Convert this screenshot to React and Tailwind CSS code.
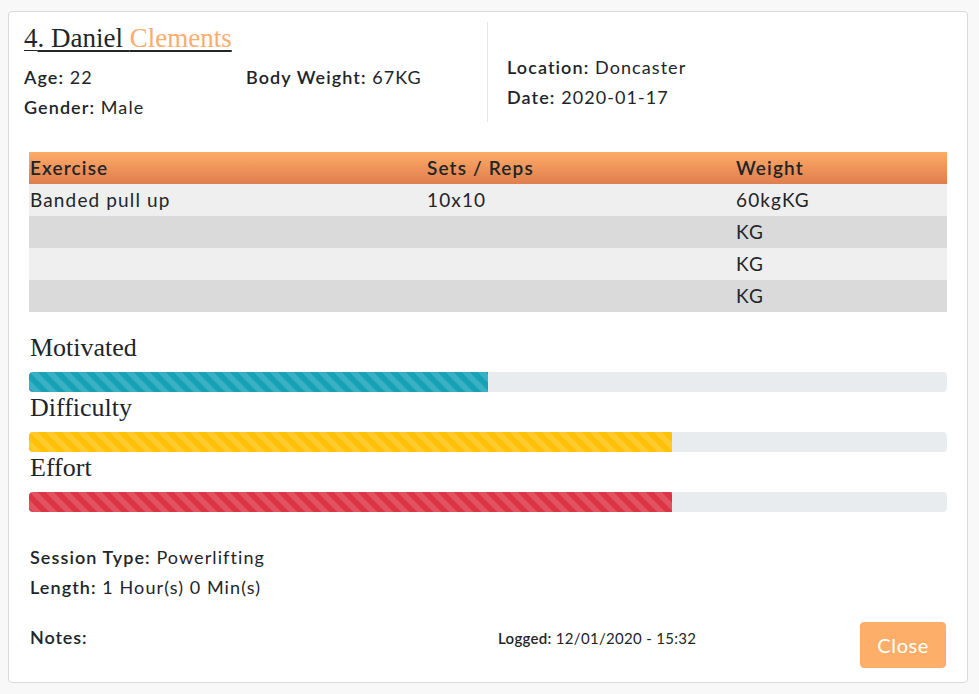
import React from 'react';

const rows = [
    { exercise: 'Banded pull up', sets: '10x10', weight: '60kgKG' },
    { exercise: '', sets: '', weight: 'KG' },
    { exercise: '', sets: '', weight: 'KG' },
    { exercise: '', sets: '', weight: 'KG' },
];

const ratings = [
    { label: 'Motivated', value: 50, color: 'bg-[#17a2b8]' },
    { label: 'Difficulty', value: 70, color: 'bg-[#ffc107]' },
    { label: 'Effort', value: 70, color: 'bg-[#dc3545]' },
];

const Info = ({ label, value }) => (
    <div className="leading-[30px] text-[18px] tracking-[0.06em] text-[#212529]">
        <span className="font-semibold">{label}:</span> <span>{value}</span>
    </div>
);

const App = () => {
    return (
        <div className="min-h-[694px] bg-[#f8f8f8] pt-[11px] pl-[8px] font-['Lato',sans-serif]">
            <div className="w-[960px] h-[672px] bg-white border border-[#d9d9d9] rounded-[4px] flex flex-col">

                {/* Header */}
                <div className="flex pt-[10px] pl-[15px]">
                    <div className="w-[464px] border-r border-[#e6e6e6]">
                        <h2 className="font-['Liberation_Serif',serif] text-[27px] leading-[32px] text-[#212529] mb-2 w-fit">
                            <span className="underline decoration-1 underline-offset-[3px]">4</span>
                            <span className="underline decoration-2 decoration-[#212529] underline-offset-[3px]">. Daniel </span>
                            <span className="text-[#fdac6b] underline decoration-2 decoration-[#212529] underline-offset-[3px]">Clements</span>
                        </h2>
                        <div className="grid grid-cols-[222px_1fr]">
                            <Info label="Age" value="22" />
                            <Info label="Body Weight" value="67KG" />
                            <Info label="Gender" value="Male" />
                        </div>
                    </div>
                    <div className="pl-[19px] pt-[30px]">
                        <Info label="Location" value="Doncaster" />
                        <Info label="Date" value="2020-01-17" />
                    </div>
                </div>

                <div className="px-[20px] pt-[30px] flex flex-col flex-1">
                    {/* Exercise table */}
                    <table className="w-full text-[19px] tracking-[0.06em] text-[#212529] border-collapse">
                        <thead>
                            <tr className="bg-linear-to-b from-[#fdac67] to-[#df7d4f] h-[32px]">
                                <th className="text-left font-semibold pl-[1px] w-[398px]">Exercise</th>
                                <th className="text-left font-semibold w-[309px]">Sets / Reps</th>
                                <th className="text-left font-semibold">Weight</th>
                            </tr>
                        </thead>
                        <tbody>
                            {rows.map((r, i) => (
                                <tr key={i} className={`h-[32px] ${i % 2 === 0 ? 'bg-[#efefef]' : 'bg-[#dadada]'}`}>
                                    <td className="pl-[1px]">{r.exercise}</td>
                                    <td>{r.sets}</td>
                                    <td>{r.weight}</td>
                                </tr>
                            ))}
                        </tbody>
                    </table>

                    {/* Ratings */}
                    <div className="mt-[20px]">
                        {ratings.map((r) => (
                            <div key={r.label}>
                                <div className="font-['Liberation_Serif',serif] text-[26px] leading-[32px] text-[#212529] mb-2 pl-[1px]">{r.label}</div>
                                <div className="h-[20px] bg-[#e9ecef] rounded-[4px] overflow-hidden">
                                    <div
                                        className={`h-full ${r.color} bg-[linear-gradient(45deg,rgba(255,255,255,.15)_25%,transparent_25%,transparent_50%,rgba(255,255,255,.15)_50%,rgba(255,255,255,.15)_75%,transparent_75%,transparent)] bg-[length:16px_16px]`}
                                        style={{ width: `${r.value}%` }}
                                    />
                                </div>
                            </div>
                        ))}
                    </div>

                    {/* Session */}
                    <div className="mt-[30px] pl-[1px]">
                        <Info label="Session Type" value="Powerlifting" />
                        <Info label="Length" value="1 Hour(s) 0 Min(s)" />
                    </div>

                    <div className="mt-[20px] flex items-start">
                        <div className="w-[469px] pl-[1px] leading-[30px] text-[18px] tracking-[0.05em] font-semibold text-[#212529]">Notes:</div>
                        <div className="leading-[32px] text-[15px] tracking-[0.02em] text-[#212529]">
                            <span className="font-semibold">Logged:</span> 12/01/2020 - 15:32
                        </div>
                        <button className="ml-auto mr-[1px] h-[46px] px-[16px] rounded-[4px] bg-[#fdaf69] border border-[#f3ad6d] text-white text-[20px] tracking-[0.03em]">
                            Close
                        </button>
                    </div>
                </div>
            </div>
        </div>
    );
};

export default App;
